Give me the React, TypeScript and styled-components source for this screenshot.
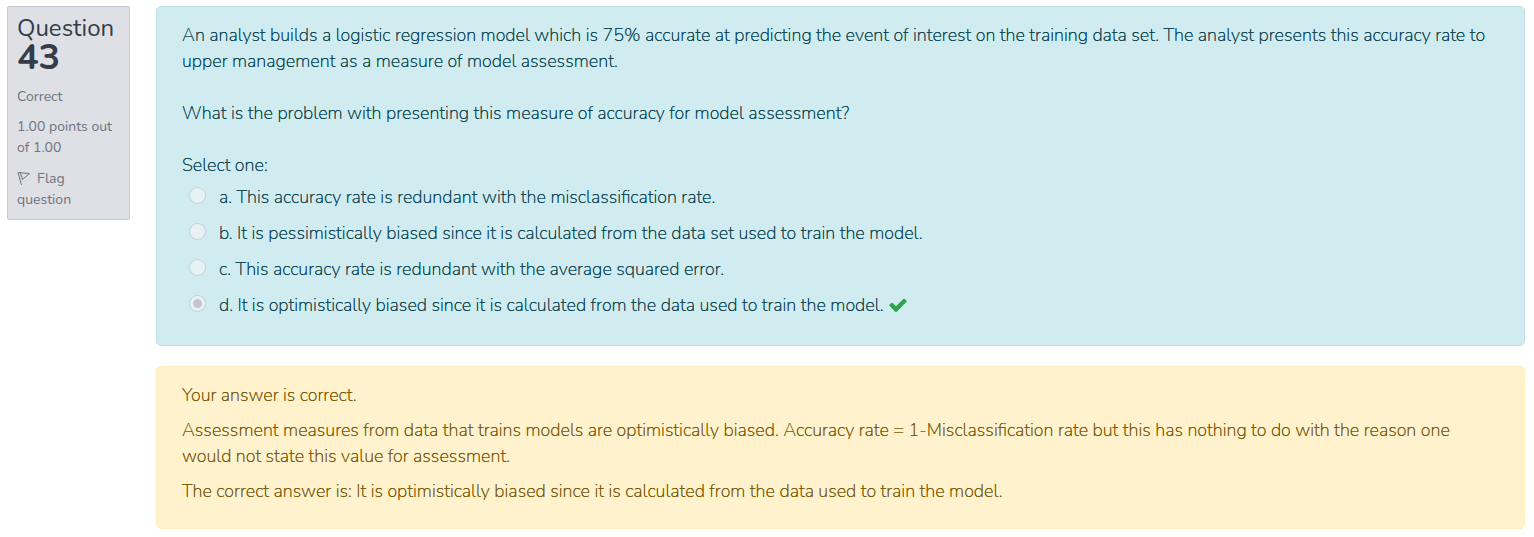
import React from "react";
import styled, { createGlobalStyle } from "styled-components";

const GlobalStyle = createGlobalStyle`
  *, *::before, *::after { box-sizing: border-box; }
  body {
    margin: 0;
    background: #fff;
    font-family: Nunito, Lato, sans-serif;
    font-size: 18px;
    font-weight: 400;
    line-height: 26px;
  }
`;

const Page = styled.main`
  display: flex;
  align-items: flex-start;
  gap: 26px;
  padding: 6px 9px 8px 7px;
`;

const Info = styled.aside`
  flex: 0 0 123px;
  padding: 8px 9px;
  border: 1px solid #c6cbd3;
  border-radius: 2px;
  background: #dee0e6;
  color: #6d747c;
  font-size: 14px;
  line-height: 21px;
`;

const Heading = styled.h3`
  margin: 0 0 11px;
  color: #343d49;
  font-size: 24px;
  font-weight: 400;
  line-height: 26px;
`;

const Number = styled.span`
  display: block;
  font-size: 36px;
  font-weight: 700;
  line-height: 34px;
`;

const InfoLine = styled.div`
  margin-bottom: 9px;
`;

const FlagLink = styled.a`
  display: block;
  padding: 1px 0;
  color: inherit;
  text-decoration: none;
`;

const FlagIcon = styled.svg`
  width: 14px;
  height: 16px;
  margin-right: 6px;
  vertical-align: -3px;
`;

const Content = styled.div`
  flex: 1;
  min-width: 0;
`;

const Panel = styled.section<{ $tone: "info" | "warning" }>`
  padding: 15px 25px 27px;
  border: 1px solid ${(p) => (p.$tone === "info" ? "#bee0e6" : "#ffeeba")};
  border-radius: 5px;
  background: ${(p) => (p.$tone === "info" ? "#d1ecf1" : "#fff2cd")};
  color: ${(p) => (p.$tone === "info" ? "#0c4652" : "#785908")};
  font-weight: 200;
  text-shadow: 0 0 0 currentColor;

  & + & {
    margin-top: 20px;
    padding-bottom: 24px;
  }
`;

const QuestionText = styled.p`
  margin: 0 0 26px;
`;

const Answers = styled.fieldset`
  margin: 0;
  padding: 0;
  border: 0;
`;

const Legend = styled.legend`
  margin-bottom: 6px;
  padding: 0;
`;

const Answer = styled.label`
  display: flex;
  align-items: flex-start;
  gap: 13px;
  padding-left: 7px;

  & + & {
    margin-top: 10px;
  }
`;

const Radio = styled.input`
  appearance: none;
  flex: none;
  width: 17px;
  height: 17px;
  margin: 3px 0 0;
  border: 1px solid #c4cfd3;
  border-radius: 50%;
  background: #e8f2f5;

  &:checked {
    background: radial-gradient(circle, #c5c6ca 4px, #e8f2f5 5px);
  }
`;

const CheckIcon = styled.svg`
  width: 20px;
  height: 20px;
  margin-left: 4px;
  vertical-align: -4px;
  fill: #2ea44f;
`;

const Feedback = styled.p`
  margin: 0;

  & + & {
    margin-top: 9px;
  }
`;

const answers = [
  "a. This accuracy rate is redundant with the misclassification rate.",
  "b. It is pessimistically biased since it is calculated from the data set used to train the model.",
  "c. This accuracy rate is redundant with the average squared error.",
  "d. It is optimistically biased since it is calculated from the data used to train the model.",
];
const chosen = 3;

export default function App() {
  return (
    <>
      <GlobalStyle />
      <Page>
        <Info>
          <Heading>
            Question <Number>43</Number>
          </Heading>
          <InfoLine>Correct</InfoLine>
          <InfoLine>1.00 points out of 1.00</InfoLine>
          <FlagLink href="#flag">
            <FlagIcon viewBox="0 0 14 16" fill="none" stroke="currentColor" aria-hidden="true">
              <path d="M1 2.5 4.5 15M1 2.5 12.5 3.5 5.5 9.5 3.5 3" />
            </FlagIcon>
            Flag question
          </FlagLink>
        </Info>
        <Content>
          <Panel $tone="info">
            <QuestionText>
              An analyst builds a logistic regression model which is 75% accurate at predicting the
              event of interest on the training data set. The analyst presents this accuracy rate to
              upper management as a measure of model assessment.
            </QuestionText>
            <QuestionText>
              What is the problem with presenting this measure of accuracy for model assessment?
            </QuestionText>
            <Answers>
              <Legend>Select one:</Legend>
              {answers.map((text, i) => (
                <Answer key={text}>
                  <Radio type="radio" name="answer" disabled defaultChecked={i === chosen} />
                  <span>
                    {text}
                    {i === chosen && (
                      <CheckIcon viewBox="0 0 1792 1792" role="img" aria-label="Correct">
                        <path d="M1671 566q0 40-28 68l-724 724-136 136q-28 28-68 28t-68-28l-136-136-362-362q-28-28-28-68t28-68l136-136q28-28 68-28t68 28l294 295 656-657q28-28 68-28t68 28l136 136q28 28 28 68z" />
                      </CheckIcon>
                    )}
                  </span>
                </Answer>
              ))}
            </Answers>
          </Panel>
          <Panel $tone="warning">
            <Feedback>Your answer is correct.</Feedback>
            <Feedback>
              Assessment measures from data that trains models are optimistically biased. Accuracy
              rate = 1-Misclassification rate but this has nothing to do with the reason one would
              not state this value for assessment.
            </Feedback>
            <Feedback>
              The correct answer is: It is optimistically biased since it is calculated from the
              data used to train the model.
            </Feedback>
          </Panel>
        </Content>
      </Page>
    </>
  );
}
